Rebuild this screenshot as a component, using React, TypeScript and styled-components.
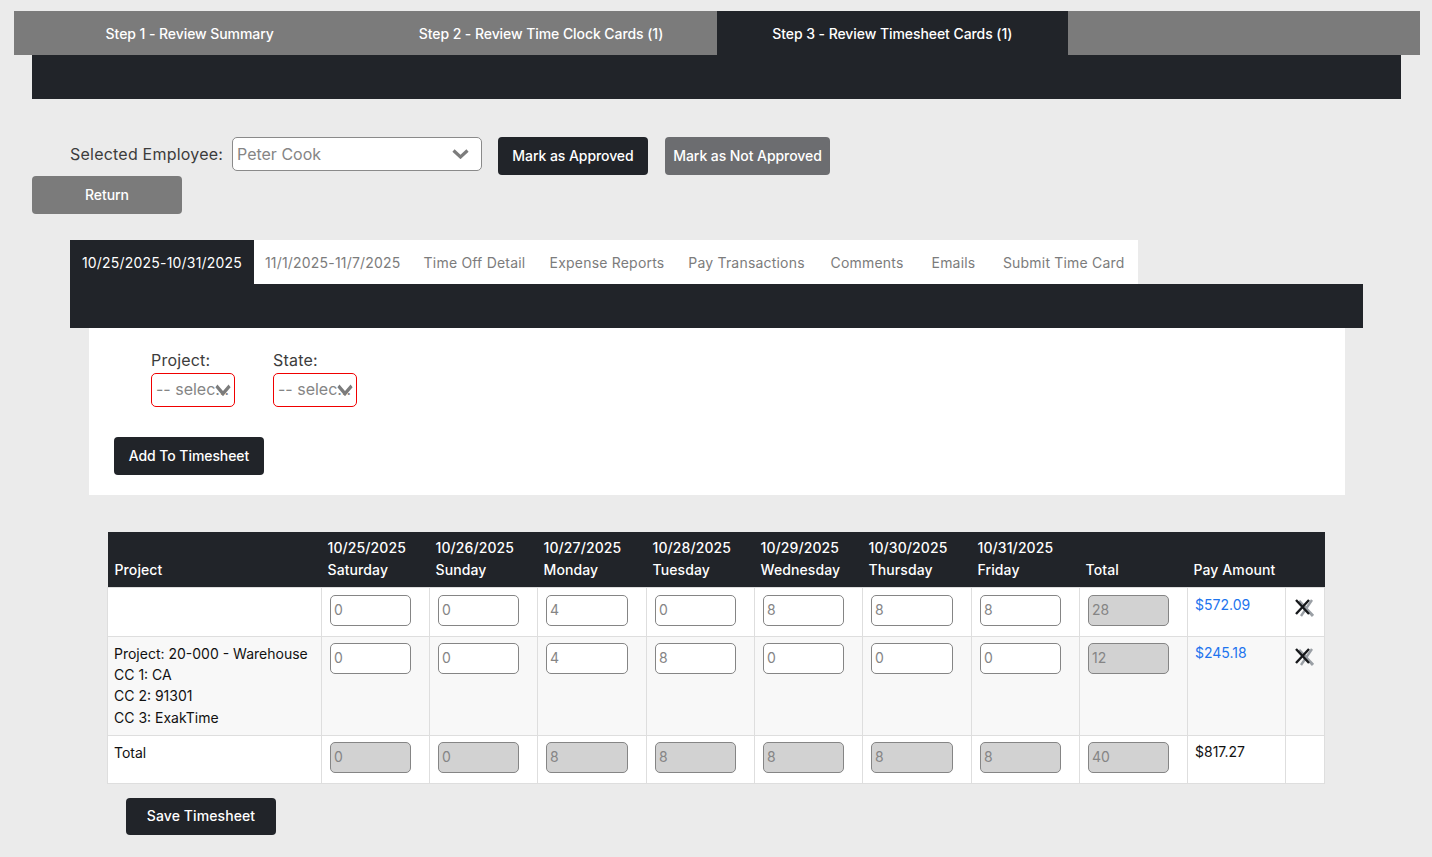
import React from "react";
import styled, { createGlobalStyle } from "styled-components";

const GlobalStyle = createGlobalStyle`
  html, body {
    margin: 0;
    padding: 0;
    background: #ebebeb;
  }
  * {
    box-sizing: border-box;
  }
  body {
    font-family: Inter, "Open Sans", "Liberation Sans", sans-serif;
  }
`;

const Page = styled.div`
  width: 1432px;
  height: 857px;
  padding-top: 11px;
  overflow: hidden;
`;

const StepBar = styled.div`
  display: flex;
  width: 1406px;
  height: 44px;
  margin-left: 14px;
  background: #7b7b7b;
`;

const StepTab = styled.div<{ $active?: boolean }>`
  width: 351.33px;
  display: flex;
  align-items: center;
  justify-content: center;
  color: #fff;
  font-size: 14px;
  font-weight: 500;
  letter-spacing: -0.07px;
  background: ${(p) => (p.$active ? "#212429" : "transparent")};
`;

const StepBand = styled.div`
  width: 1369px;
  height: 44px;
  margin-left: 32px;
  background: #212429;
`;

const EmployeeRow = styled.div`
  display: flex;
  align-items: flex-start;
  margin: 38px 0 0 70px;
  height: 39px;
`;

const EmployeeLabel = styled.label`
  width: 162px;
  font-size: 16px;
  line-height: 34px;
  letter-spacing: 0.22px;
  color: #3c3c3c;
`;

const SelectWrap = styled.div<{ $width: number }>`
  position: relative;
  width: ${(p) => p.$width}px;
  height: 34px;
`;

const Select = styled.select<{ $invalid?: boolean }>`
  appearance: none;
  display: block;
  width: 100%;
  height: 100%;
  padding: ${(p) => (p.$invalid ? "0 1px 2px 4px" : "0 30px 0 4px")};
  border: 1px solid ${(p) => (p.$invalid ? "#f00000" : "#8a8a8a")};
  border-radius: 5px;
  background: #fff;
  color: #858585;
  font-family: inherit;
  font-size: 16px;
  text-overflow: ellipsis;
`;

const Chevron = styled.svg<{ $small?: boolean }>`
  position: absolute;
  right: ${(p) => (p.$small ? "4px" : "13px")};
  top: ${(p) => (p.$small ? "11px" : "12px")};
  width: ${(p) => (p.$small ? "16px" : "17px")};
  height: ${(p) => (p.$small ? "12px" : "10px")};
  filter: blur(0.4px);
  pointer-events: none;
`;

const Button = styled.button<{ $tone?: "dark" | "mid" | "light"; $width: number }>`
  width: ${(p) => p.$width}px;
  height: 38px;
  padding: 0 0 2px;
  border: none;
  border-radius: 4px;
  color: #fff;
  font-family: inherit;
  font-size: 14px;
  font-weight: 500;
  letter-spacing: -0.07px;
  background: ${(p) =>
    p.$tone === "mid" ? "#6c6d70" : p.$tone === "light" ? "#7b7b7b" : "#212429"};
`;

const ApproveButton = styled(Button)`
  margin-left: 16px;
`;

const NotApproveButton = styled(Button)`
  margin-left: 17px;
`;

const ReturnButton = styled(Button)`
  display: block;
  margin-left: 32px;
`;

const DetailTabs = styled.div`
  display: flex;
  width: 1068px;
  height: 44px;
  margin: 26px 0 0 70px;
  background: #fff;
`;

const DetailTab = styled.div<{ $active?: boolean; $width: number }>`
  width: ${(p) => p.$width}px;
  display: flex;
  align-items: center;
  justify-content: center;
  white-space: nowrap;
  font-size: 14px;
  letter-spacing: 0.2px;
  color: ${(p) => (p.$active ? "#fff" : "#7c7c7c")};
  background: ${(p) => (p.$active ? "#212429" : "transparent")};
`;

const DetailBand = styled.div`
  width: 1293px;
  height: 44px;
  margin-left: 70px;
  background: #212429;
`;

const FilterPanel = styled.div`
  width: 1256px;
  height: 167px;
  margin-left: 89px;
  padding: 20px 0 0 25px;
  background: #fff;
`;

const FilterRow = styled.div`
  display: flex;
  gap: 38px;
  padding-left: 37px;
`;

const FilterLabel = styled.div`
  height: 25px;
  font-size: 16px;
  line-height: 24px;
  letter-spacing: 0.2px;
  color: #3c3c3c;
`;

const AddButton = styled(Button)`
  display: block;
  margin-top: 30px;
`;

const Table = styled.table`
  table-layout: fixed;
  width: 1217px;
  margin: 37px 0 0 107px;
  border-collapse: collapse;
  font-size: 14px;
`;

const HeadRow = styled.tr`
  height: 55px;
  background: #212429;
`;

const HeadCell = styled.th`
  padding: 0 6px 6px;
  vertical-align: bottom;
  text-align: left;
  color: #fff;
  font-weight: 500;
  line-height: 22px;
  letter-spacing: 0.1px;
  white-space: nowrap;

  &:first-child {
    padding-left: 7px;
  }
`;

const Row = styled.tr<{ $shade?: boolean; $height: number }>`
  height: ${(p) => p.$height}px;
  background: ${(p) => (p.$shade ? "#f8f8f8" : "#fff")};
`;

const Cell = styled.td`
  padding: 8px 8px 0;
  vertical-align: top;
  border: 1px solid #dedede;
  color: #111;
`;

const HourCell = styled(Cell)<{ $first?: boolean }>`
  padding: ${(p) => (p.$first ? "7px" : "6px")} 18px 0 8px;
`;

const ProjectCell = styled(Cell)`
  padding: 6px 6px 0;
  line-height: 21.4px;
  white-space: nowrap;
`;

const AmountCell = styled(Cell)<{ $first?: boolean }>`
  padding: ${(p) => (p.$first ? "7px" : "6px")} 7px 0;
  line-height: 20px;
`;

const PayLink = styled.a`
  color: #1d74ee;
  text-decoration: none;
`;

const HourInput = styled.input`
  display: block;
  width: 100%;
  height: 31px;
  padding: 0 3px 1px;
  border: 1px solid #858585;
  border-radius: 5px;
  background: ${(p) => (p.disabled ? "#d2d2d2" : "#fff")};
  color: #858585;
  font-family: inherit;
  font-size: 14px;
`;

const RemoveIcon = styled.svg`
  display: block;
  width: 20px;
  height: 22px;
  filter: blur(0.35px);
`;

const SaveButton = styled(Button)`
  display: block;
  margin: 14px 0 0 126px;
  height: 37px;
  letter-spacing: 0.1px;
`;

const steps = [
  "Step 1 - Review Summary",
  "Step 2 - Review Time Clock Cards (1)",
  "Step 3 - Review Timesheet Cards (1)",
];

const detailTabs: [string, number][] = [
  ["10/25/2025-10/31/2025", 184],
  ["11/1/2025-11/7/2025", 157.5],
  ["Time Off Detail", 126],
  ["Expense Reports", 139],
  ["Pay Transactions", 140],
  ["Comments", 101],
  ["Emails", 72],
  ["Submit Time Card", 148.5],
];

const colWidths = [214, 108, 108, 109, 108, 108, 109, 108, 108, 98, 39];

const days = [
  ["10/25/2025", "Saturday"],
  ["10/26/2025", "Sunday"],
  ["10/27/2025", "Monday"],
  ["10/28/2025", "Tuesday"],
  ["10/29/2025", "Wednesday"],
  ["10/30/2025", "Thursday"],
  ["10/31/2025", "Friday"],
];

const ChevronIcon = ({ small }: { small?: boolean }) => (
  <Chevron $small={small} viewBox="0 0 17 10" preserveAspectRatio="none">
    <path d="M1.5 1.5 L8.5 8 L15.5 1.5" fill="none" stroke="#7c7c7c" strokeWidth="3.2" />
  </Chevron>
);

const XIcon = () => (
  <RemoveIcon viewBox="0 0 20 22">
    <path d="M5 5 L19 20" stroke="#9a9fa5" strokeWidth="3" fill="none" />
    <path d="M18 4 L7 20" stroke="#9a9fa5" strokeWidth="2.4" fill="none" />
    <path d="M2 4 L15 18" stroke="#16181b" strokeWidth="2.4" fill="none" />
    <path d="M15 4 L2 18" stroke="#16181b" strokeWidth="2.4" fill="none" />
  </RemoveIcon>
);

const HourCells = ({
  values,
  disabled,
  first,
}: {
  values: string[];
  disabled?: boolean;
  first?: boolean;
}) => (
  <>
    {values.map((value, i) => (
      <HourCell key={i} $first={first}>
        <HourInput defaultValue={value} disabled={disabled} readOnly={!disabled} />
      </HourCell>
    ))}
  </>
);

const App = () => {
  return (
    <Page>
      <GlobalStyle />
      <StepBar>
        {steps.map((step, i) => (
          <StepTab key={step} $active={i === 2}>
            {step}
          </StepTab>
        ))}
      </StepBar>
      <StepBand />

      <EmployeeRow>
        <EmployeeLabel>Selected Employee:</EmployeeLabel>
        <SelectWrap $width={250}>
          <Select defaultValue="Peter Cook">
            <option>Peter Cook</option>
          </Select>
          <ChevronIcon />
        </SelectWrap>
        <ApproveButton $width={150}>Mark as Approved</ApproveButton>
        <NotApproveButton $tone="mid" $width={165}>
          Mark as Not Approved
        </NotApproveButton>
      </EmployeeRow>
      <ReturnButton $tone="light" $width={150}>
        Return
      </ReturnButton>

      <DetailTabs>
        {detailTabs.map(([label, width], i) => (
          <DetailTab key={label} $active={i === 0} $width={width}>
            {label}
          </DetailTab>
        ))}
      </DetailTabs>
      <DetailBand />

      <FilterPanel>
        <FilterRow>
          <div>
            <FilterLabel>Project:</FilterLabel>
            <SelectWrap $width={84}>
              <Select $invalid defaultValue="-- select --">
                <option>-- select --</option>
              </Select>
              <ChevronIcon small />
            </SelectWrap>
          </div>
          <div>
            <FilterLabel>State:</FilterLabel>
            <SelectWrap $width={84}>
              <Select $invalid defaultValue="-- select --">
                <option>-- select --</option>
              </Select>
              <ChevronIcon small />
            </SelectWrap>
          </div>
        </FilterRow>
        <AddButton $width={150}>Add To Timesheet</AddButton>
      </FilterPanel>

      <Table>
        <colgroup>
          {colWidths.map((width, i) => (
            <col key={i} width={width} />
          ))}
        </colgroup>
        <thead>
          <HeadRow>
            <HeadCell>Project</HeadCell>
            {days.map(([date, day]) => (
              <HeadCell key={date}>
                {date}
                <br />
                {day}
              </HeadCell>
            ))}
            <HeadCell>Total</HeadCell>
            <HeadCell>Pay Amount</HeadCell>
            <HeadCell />
          </HeadRow>
        </thead>
        <tbody>
          <Row $height={49}>
            <ProjectCell />
            <HourCells values={["0", "0", "4", "0", "8", "8", "8"]} first />
            <HourCell $first>
              <HourInput defaultValue="28" disabled />
            </HourCell>
            <AmountCell $first>
              <PayLink href="#">$572.09</PayLink>
            </AmountCell>
            <Cell>
              <XIcon />
            </Cell>
          </Row>
          <Row $height={99} $shade>
            <ProjectCell>
              Project: 20-000 - Warehouse
              <br />
              CC 1: CA
              <br />
              CC 2: 91301
              <br />
              CC 3: ExakTime
            </ProjectCell>
            <HourCells values={["0", "0", "4", "8", "0", "0", "0"]} />
            <HourCell>
              <HourInput defaultValue="12" disabled />
            </HourCell>
            <AmountCell>
              <PayLink href="#">$245.18</PayLink>
            </AmountCell>
            <Cell>
              <XIcon />
            </Cell>
          </Row>
          <Row $height={48}>
            <ProjectCell>Total</ProjectCell>
            <HourCells values={["0", "0", "8", "8", "8", "8", "8"]} disabled />
            <HourCell>
              <HourInput defaultValue="40" disabled />
            </HourCell>
            <AmountCell>$817.27</AmountCell>
            <Cell />
          </Row>
        </tbody>
      </Table>

      <SaveButton $width={150}>Save Timesheet</SaveButton>
    </Page>
  );
};

export default App;
